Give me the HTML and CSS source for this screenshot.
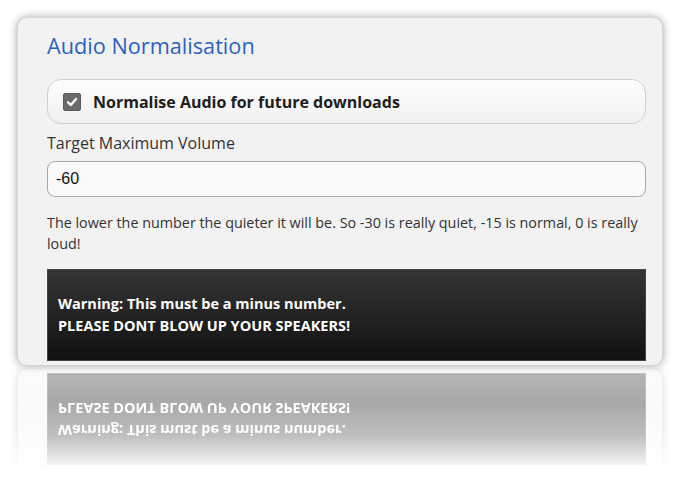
FILE: index.html
```html
<!DOCTYPE html>
<html>
<head>
<meta charset="utf-8">
<link rel="stylesheet" href="styles.css">
</head>
<body>
<div class="page">
  <section class="card">
    <h1 class="title">Audio Normalisation</h1>
    <label class="check-row">
      <span class="checkbox">
        <svg width="12" height="12" viewBox="0 0 12 12"><path d="M2 6.3 L4.8 9 L10 3" fill="none" stroke="#fff" stroke-width="2.4" stroke-linecap="round" stroke-linejoin="round"/></svg>
      </span>
      <span class="check-label">Normalise Audio for future downloads</span>
    </label>
    <div class="field-label">Target Maximum Volume</div>
    <div class="input">-60</div>
    <p class="help">The lower the number the quieter it will be. So -30 is really quiet, -15 is normal, 0 is really loud!</p>
    <div class="warning">
      <div><b>Warning:</b> This must be a minus number.</div>
      <div>PLEASE DONT BLOW UP YOUR SPEAKERS!</div>
    </div>
  </section>
  <div class="reflection" aria-hidden="true">
    <div class="slice">
      <div class="warning">
        <div><b>Warning:</b> This must be a minus number.</div>
        <div>PLEASE DONT BLOW UP YOUR SPEAKERS!</div>
      </div>
    </div>
  </div>
</div>
</body>
</html>
```

FILE: styles.css
```css
html, body {
  margin: 0;
  padding: 0;
  background: #ffffff;
}
.page {
  padding: 17px 16px 0 17px;
  font-family: "Open Sans", "Liberation Sans", sans-serif;
}
.card {
  box-sizing: border-box;
  height: 349px;
  overflow: hidden;
  background: #f2f2f2;
  border: 1px solid #d6d6d6;
  border-radius: 10px;
  box-shadow: 0 0 9px rgba(0, 0, 0, 0.35);
  padding: 13px 16px 0 29px;
}
.reflection {
  margin: 2px -12px 0;
  padding: 0 12px;
  height: 104px;
  overflow: hidden;
  -webkit-mask-image: linear-gradient(to bottom, rgba(0,0,0,0.3) 0%, rgba(0,0,0,0.38) 35%, rgba(0,0,0,0.3) 65%, rgba(0,0,0,0) 100%);
  mask-image: linear-gradient(to bottom, rgba(0,0,0,0.3) 0%, rgba(0,0,0,0.38) 35%, rgba(0,0,0,0.3) 65%, rgba(0,0,0,0) 100%);
}
.slice {
  box-sizing: border-box;
  height: 104px;
  display: flex;
  flex-direction: column;
  justify-content: flex-end;
  background: #f2f2f2;
  border: 1px solid #d6d6d6;
  border-top: 0;
  border-radius: 0 0 10px 10px;
  box-shadow: 0 0 9px rgba(0, 0, 0, 0.35);
  padding: 0 16px 4px 29px;
  transform: scaleY(-1);
}
.title {
  margin: 0;
  font-size: 21.7px;
  line-height: 30px;
  font-weight: 400;
  color: #2b61c4;
}
.check-row {
  margin-top: 18px;
  height: 45px;
  box-sizing: border-box;
  display: flex;
  align-items: center;
  gap: 12px;
  padding-left: 15px;
  border: 1px solid #cfcfcf;
  border-radius: 14px;
  background: linear-gradient(to bottom, #fdfdfd, #f1f1f1);
}
.checkbox {
  width: 18px;
  height: 18px;
  border-radius: 3px;
  background: #6b6b6b;
  box-shadow: inset 0 0 0 1px #5a5a5a;
  display: flex;
  align-items: center;
  justify-content: center;
}
.check-label {
  font-size: 16px;
  font-weight: 700;
  color: #1e1e1e;
}
.field-label {
  margin-top: 8px;
  font-size: 16px;
  line-height: 22px;
  color: #333;
}
.input {
  margin-top: 7px;
  height: 36px;
  box-sizing: border-box;
  border: 1px solid #a8a8a8;
  border-radius: 8px;
  background: #fafafa;
  padding: 0 8px;
  display: flex;
  align-items: center;
  font-family: "Liberation Sans", Arial, sans-serif;
  font-size: 16px;
  color: #111;
}
.help {
  margin: 15px 0 0;
  font-size: 14.35px;
  line-height: 21px;
  color: #333;
}
.warning {
  margin-top: 15px;
  height: 92px;
  flex-shrink: 0;
  box-sizing: border-box;
  padding: 23px 10px;
  background: linear-gradient(to bottom, #353535, #111111);
  border: 1px solid #444;
  color: #fff;
  font-size: 14.5px;
  font-weight: 700;
  line-height: 22px;
}
.warning b {
  font-weight: 700;
}
```
